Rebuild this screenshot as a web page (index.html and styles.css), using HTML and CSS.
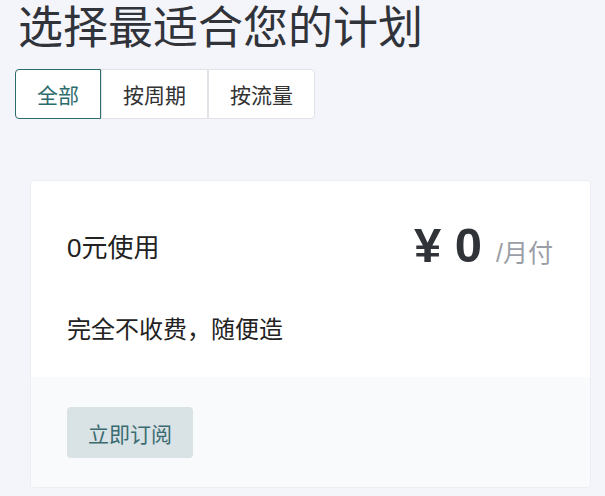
FILE: index.html
```html
<!DOCTYPE html>
<html lang="zh-CN">
<head>
    <meta charset="UTF-8">
    <meta name="viewport" content="width=device-width, initial-scale=1.0">
    <title>选择计划</title>
    <link rel="stylesheet" href="styles.css">
</head>
<body>
    <div class="page">
        <h1 class="title">选择最适合您的计划</h1>

        <!-- 筛选 -->
        <div class="tabs">
            <button class="tab active">全部</button>
            <button class="tab">按周期</button>
            <button class="tab">按流量</button>
        </div>

        <!-- 套餐卡片 -->
        <div class="plan-card">
            <div class="plan-body">
                <div class="plan-head">
                    <div class="plan-name">0元使用</div>
                    <div class="plan-price">
                        <span class="amount">¥ 0</span>
                        <span class="period">/月付</span>
                    </div>
                </div>
                <p class="plan-desc">完全不收费，随便造</p>
            </div>
            <div class="plan-foot">
                <button class="subscribe">立即订阅</button>
            </div>
        </div>
    </div>
</body>
</html>
```

FILE: styles.css
```css
/* Estilos básicos */
body {
    margin: 0;
    padding: 0;
    background-color: #f4f5fa;
    font-family: "Liberation Sans", "Noto Sans CJK SC", sans-serif;
    color: #333;
}

.page {
    padding: 0 14px 0 15px;
}

.title {
    margin: 0;
    padding: 2px 0 0 3px;
    font-size: 45px;
    font-weight: 400;
    line-height: 53px;
    color: #30343a;
}

/* Pestañas */
.tabs {
    display: flex;
    margin-top: 14px;
}

.tab {
    height: 50px;
    padding: 0 21px;
    font-family: inherit;
    font-size: 21px;
    color: #333;
    background-color: #fff;
    border: 1px solid #e1e3e8;
    border-radius: 0;
    cursor: pointer;
}

.tab:first-child {
    border-radius: 4px 0 0 4px;
}

.tab:last-child {
    border-radius: 0 4px 4px 0;
}

.tab.active {
    color: #2d6b6d;
    border-color: #2d6b6d;
}

/* Tarjeta */
.plan-card {
    margin: 61px 0 0 15px;
    background-color: #fff;
    border: 1px solid #eceef3;
    border-radius: 4px;
    overflow: hidden;
}

.plan-body {
    padding: 39px 37px 29px 36px;
}

.plan-head {
    display: flex;
    justify-content: space-between;
    align-items: center;
    height: 50px;
}

.plan-name {
    font-size: 26px;
    color: #222;
}

.plan-price {
    display: flex;
    align-items: baseline;
    gap: 14px;
}

.amount {
    font-size: 49px;
    font-weight: 700;
    color: #303338;
}

.period {
    font-size: 25px;
    color: #9a9ea6;
}

.plan-desc {
    margin: 42px 0 0;
    font-size: 24px;
    line-height: 36px;
    color: #222;
}

.plan-foot {
    padding: 30px 36px 29px 36px;
    background-color: #f9fafc;
}

.subscribe {
    height: 51px;
    padding: 0 21px;
    font-family: inherit;
    font-size: 21px;
    color: #3a6b70;
    background-color: #d9e2e5;
    border: none;
    border-radius: 4px;
    cursor: pointer;
}
```
